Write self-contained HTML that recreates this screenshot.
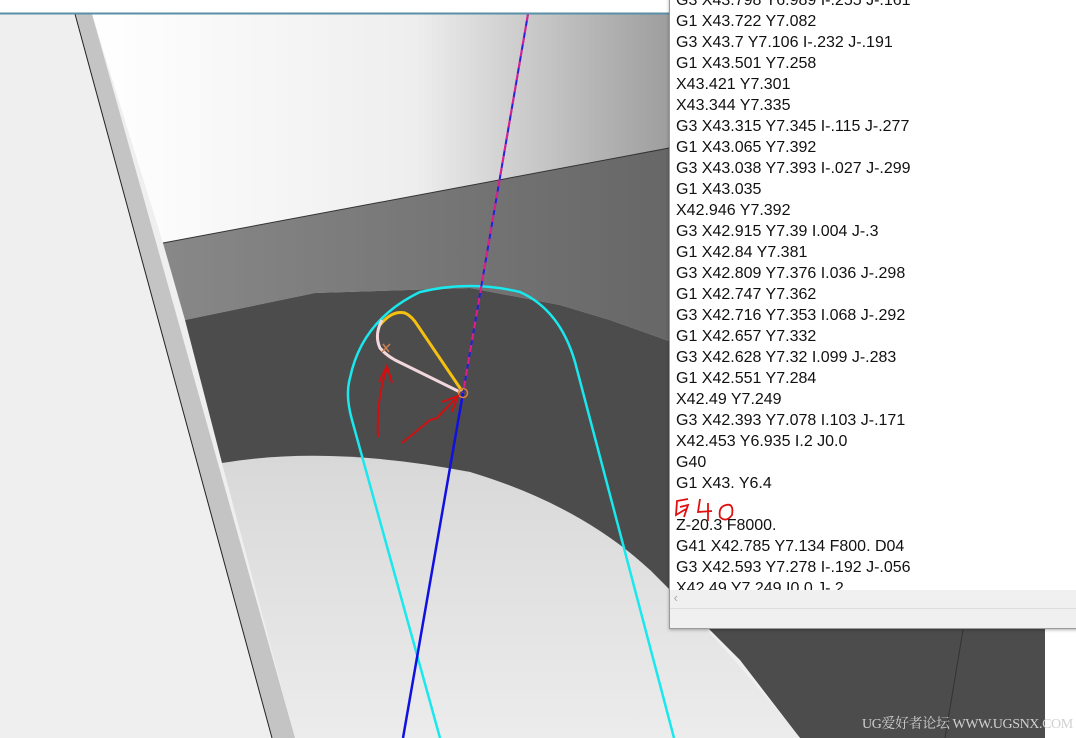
<!DOCTYPE html>
<html><head><meta charset="utf-8"><style>
html,body{margin:0;padding:0;width:1076px;height:738px;overflow:hidden;background:#fff}
svg{position:absolute;left:0;top:0}
#panel{position:absolute;left:669px;top:-10px;width:420px;height:638px;background:#fff;border-left:1px solid #9a9a9a;border-bottom:1px solid #9a9a9a;box-shadow:0 1px 3px rgba(0,0,0,.3);overflow:hidden}
#txt{position:absolute;left:6px;top:0;font-family:"Liberation Sans",sans-serif;font-size:16px;line-height:21px;color:#111;white-space:pre}
#sb{position:absolute;left:0;top:600px;width:100%;height:18px;background:#f0f0f0;border-bottom:1px solid #ddd;color:#aaa;font-size:13px;font-family:"Liberation Sans",sans-serif}
#st{position:absolute;left:0;top:619px;width:100%;height:19px;background:#f0f0f0}
#wm{position:absolute;left:862px;top:713px;font-family:"Liberation Serif","Noto Serif CJK SC",serif;font-size:14px;color:#d0d0d0;white-space:nowrap;letter-spacing:-0.4px}
</style></head><body>
<svg width="1076" height="738" viewBox="0 0 1076 738">
<defs>
<linearGradient id="g1" x1="0" x2="1" y1="0" y2="0"><stop offset="0" stop-color="#ffffff"/><stop offset="0.55" stop-color="#eeeeee"/><stop offset="1" stop-color="#9a9a9a"/></linearGradient>
<linearGradient id="g2" x1="0" x2="1"><stop offset="0" stop-color="#888"/><stop offset="1" stop-color="#666"/></linearGradient>
<linearGradient id="g3" x1="0" x2="0" y1="0" y2="1"><stop offset="0" stop-color="#d8d8d8"/><stop offset="1" stop-color="#ececec"/></linearGradient>
</defs>
<rect width="1076" height="738" fill="#efefef"/>
<rect x="1045" y="0" width="31" height="738" fill="#fff"/>
<polygon points="92,14 680,14 680,146 163,243" fill="url(#g1)"/>
<polygon points="163,243 680,146 680,345 610,320 560,305 470,288 315,293 185,320" fill="url(#g2)"/>
<polygon points="163,243 680,146" fill="none" stroke="#333" stroke-width="1"/>
<polygon points="185,320 315,293 470,288 560,305 610,320 680,345 1045,345 1045,738 800,738 740,660 650,570 580,520 470,472 330,457 222,463" fill="#4c4c4c"/>
<path d="M222,463 Q330,445 470,472 Q580,505 650,570 Q720,640 800,738 L295,738 Z" fill="url(#g3)"/>
<polygon points="75,14 92,14 295,738 272,738" fill="#c4c4c4"/>
<line x1="75" y1="14" x2="272" y2="738" stroke="#222" stroke-width="1"/>
<line x1="963" y1="630" x2="945" y2="738" stroke="#333" stroke-width="1"/>
<path d="M440,738 L352,420 Q345,395 350,378 Q362,320 420,292 Q470,280 520,292 Q560,310 575,362 L674,738" fill="none" stroke="#19e8ee" stroke-width="2.5"/>
<line x1="463" y1="393" x2="403" y2="738" stroke="#1010e0" stroke-width="2.5"/>
<line x1="528" y1="14" x2="463" y2="393" stroke="#2020e0" stroke-width="2"/>
<line x1="528" y1="14" x2="463" y2="393" stroke="#e0208a" stroke-width="2" stroke-dasharray="7,5"/>
<path d="M380,325 Q392,310 405,313 Q412,316 418,326 L462,391" fill="none" stroke="#f5c010" stroke-width="3"/>
<path d="M382,320 Q374,335 380,348 Q386,355 395,360 L460,392" fill="none" stroke="#f2d8dc" stroke-width="3"/>
<path d="M382,352 l8,-8 M383,344 l6,8" stroke="#d08050" stroke-width="1.5"/>
<circle cx="463" cy="393" r="4.5" fill="none" stroke="#e0803a" stroke-width="1.5"/>
<path d="M378,437 Q376,400 387,368 M379,382 L387,366 L392,383" fill="none" stroke="#d01010" stroke-width="2"/>
<path d="M402,443 L430,420 L437,418 L457,397 M442,402 L458,396 L452,412" fill="none" stroke="#d01010" stroke-width="2"/>
<rect x="0" y="0" width="680" height="13" fill="#fff"/>
<line x1="0" y1="13.5" x2="680" y2="13.5" stroke="#5a8fa8" stroke-width="2"/>
</svg>
<div id="panel">
<div id="txt">G3 X43.798 Y6.989 I-.255 J-.161
G1 X43.722 Y7.082
G3 X43.7 Y7.106 I-.232 J-.191
G1 X43.501 Y7.258
X43.421 Y7.301
X43.344 Y7.335
G3 X43.315 Y7.345 I-.115 J-.277
G1 X43.065 Y7.392
G3 X43.038 Y7.393 I-.027 J-.299
G1 X43.035
X42.946 Y7.392
G3 X42.915 Y7.39 I.004 J-.3
G1 X42.84 Y7.381
G3 X42.809 Y7.376 I.036 J-.298
G1 X42.747 Y7.362
G3 X42.716 Y7.353 I.068 J-.292
G1 X42.657 Y7.332
G3 X42.628 Y7.32 I.099 J-.283
G1 X42.551 Y7.284
X42.49 Y7.249
G3 X42.393 Y7.078 I.103 J-.171
X42.453 Y6.935 I.2 J0.0
G40
G1 X43. Y6.4
 
Z-20.3 F8000.
G41 X42.785 Y7.134 F800. D04
G3 X42.593 Y7.278 I-.192 J-.056
X42.49 Y7.249 I0.0 J-.2</div>
<svg width="100" height="30" style="left:4px;top:505px" viewBox="0 0 100 30"><path d="M14,4 L3,6 L2,20 L12,14 M6,12 L14,10 L10,22 M26,4 L24,17 L38,16 M34,8 L34,26 M52,10 Q44,12 46,22 Q52,28 58,20 Q60,8 52,10" fill="none" stroke="#e01010" stroke-width="1.8"/></svg>
<div id="sb">&nbsp;‹</div>
<div id="st"></div>
</div>
<div id="wm">UG爱好者论坛 WWW.UGSNX.COM</div>
</body></html>
